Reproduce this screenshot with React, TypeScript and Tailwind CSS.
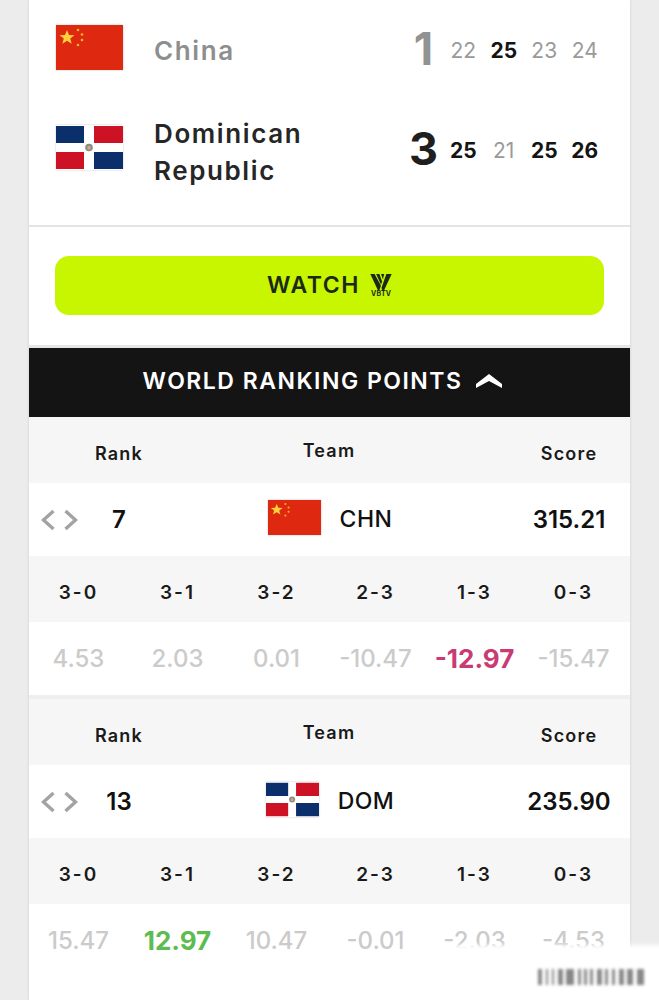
import React from "react";

const FONT = "[font-family:Inter,'Liberation_Sans',sans-serif]";

function ChinaFlag({ w, h }: { w: number; h: number }) {
  return (
    <svg width={w} height={h} viewBox="0 0 67 45" preserveAspectRatio="none" className="shrink-0 block shadow-[0_0_2px_rgba(0,0,0,0.25)]">
      <rect width="67" height="45" fill="#de2910" />
      <polygon fill="#ffd23a" points="11,5 13,10 18.500,10.300 14.200,13.500 15.700,18.800 11,15.800 6.300,18.800 7.800,13.500 3.500,10.300 9,10" />
      <circle cx="22" cy="5" r="1.300" fill="#f5b32f" />
      <circle cx="26" cy="9.500" r="1.300" fill="#f5b32f" />
      <circle cx="26" cy="15" r="1.300" fill="#f5b32f" />
      <circle cx="22" cy="20" r="1.300" fill="#f5b32f" />
    </svg>
  );
}

function DomFlag({ w, h }: { w: number; h: number }) {
  return (
    <svg width={w} height={h} viewBox="0 0 67 45" preserveAspectRatio="none" className="shrink-0 block shadow-[0_0_2px_rgba(0,0,0,0.2)]">
      <rect width="67" height="45" fill="#fff" />
      <rect x="0" y="1" width="28" height="17" fill="#0a2f6b" />
      <rect x="38" y="1" width="29" height="17" fill="#ce1226" />
      <rect x="0" y="27" width="28" height="17" fill="#ce1226" />
      <rect x="38" y="27" width="29" height="17" fill="#0a2f6b" />
      <circle cx="33" cy="22.500" r="3.800" fill="#8d8a80" />
      <rect x="31.500" y="21" width="3" height="3.500" fill="#c7ab8a" />
    </svg>
  );
}

function Match({ flag, name, sets, total, win }: { flag: React.ReactNode; name: React.ReactNode; sets: [number, boolean][]; total: number; win: boolean }) {
  return (
    <div className="flex items-center h-[100px] pl-[27px] pr-[25px]">
      <div className="mb-[6px]">{flag}</div>
      <div className={`ml-[31px] text-[26px] leading-[37px] font-semibold tracking-[1.600px] ${win ? "pt-[3px] text-[#262626]" : "text-[#8e8e8e]"}`}>{name}</div>
      <div className="ml-auto flex items-center">
        <div className={`w-[40px] pl-[1px] text-center text-[45px] leading-none font-bold mb-[3px] ${win ? "text-[#1f1f1f]" : "text-[#929292]"}`}>{total}</div>
        {sets.map(([v, w], i) => (
          <div key={i} className={`w-[40.500px] text-center text-[21px] leading-none ${w ? "font-bold text-[#141414]" : "font-normal text-[#9a9a9a]"}`}>{v}</div>
        ))}
      </div>
    </div>
  );
}

function Chevrons() {
  return (
    <svg width="37" height="22" viewBox="0 0 37 22" fill="none" stroke="#a3a3a3" strokeWidth="3.400" className="ml-[12px] shrink-0">
      <path d="M12.500 2 L2.500 11 L12.500 20" />
      <path d="M24.500 2 L34.500 11 L24.500 20" />
    </svg>
  );
}

function Table({ flag, code, rank, score, pts }: { flag: React.ReactNode; code: string; rank: number; score: string; pts: { v: string; c?: "loss" | "win" }[] }) {
  const labels = ["3-0", "3-1", "3-2", "2-3", "1-3", "0-3"];
  return (
    <div>
      <div className="flex h-[66px] bg-[#f6f6f6] text-[18px] font-semibold tracking-[1.200px] text-[#1a1a1a]">
        <div className="w-[180px] flex items-center justify-center pt-[6px]">Rank</div>
        <div className="w-[240px] flex items-center justify-center">Team</div>
        <div className="ml-auto w-[122px] flex items-center justify-center pt-[6px]">Score</div>
      </div>
      <div className="flex items-center h-[73px] bg-white text-[#111]">
        <div className="w-[180px] flex items-center">
          <Chevrons />
          <div className="w-[82px] text-center text-[24px] font-semibold leading-none">{rank}</div>
        </div>
        <div className="w-[240px] flex items-center justify-center gap-[19px] pl-[2px]">
          <div className="mb-[4px]">{flag}</div>
          <span className="text-[23px] font-medium tracking-[0.5px] leading-none">{code}</span>
        </div>
        <div className="ml-auto w-[122px] text-center text-[24px] font-semibold leading-none">{score}</div>
      </div>
      <div className="grid grid-cols-[repeat(6,99px)] h-[66px] bg-[#f6f6f6] items-center text-center pt-[8px] text-[19px] font-semibold tracking-[2px] text-[#1a1a1a]">
        {labels.map((l) => (
          <div key={l}>{l}</div>
        ))}
      </div>
      <div className="grid grid-cols-[repeat(6,99px)] h-[73px] bg-white items-center text-center">
        {pts.map((p, i) => (
          <div
            key={i}
            className={
              p.c === "loss"
                ? "text-[26px] font-bold text-[#c93b72]"
                : p.c === "win"
                ? "text-[26px] font-bold text-[#5cbc50]"
                : "text-[24px] font-medium text-[#cbcbcb]"
            }
          >
            {p.v}
          </div>
        ))}
      </div>
    </div>
  );
}

export default function App() {
  return (
    <div className={`relative h-[1000px] w-[659px] overflow-hidden bg-[#ececec] ${FONT}`}>
      <div className="ml-[29px] w-[601px] h-[1000px] bg-white shadow-[0_0_3px_rgba(0,0,0,0.12)]">
        <div className="h-[225px]">
          <Match flag={<ChinaFlag w={67} h={45} />} name="China" total={1} win={false} sets={[[22, false], [25, true], [23, false], [24, false]]} />
          <Match flag={<DomFlag w={67} h={45} />} name={<>Dominican<br />Republic</>} total={3} win sets={[[25, true], [21, false], [25, true], [26, true]]} />
        </div>
        <div className="h-[2px] bg-[#e4e4e4]" />
        <div className="pt-[29px] pb-[30px] px-[26px]">
          <div className="h-[59px] rounded-[14px] bg-[#c7f600] flex items-center justify-center gap-[10px] text-[#1b2a17]">
            <span className="text-[23px] font-semibold tracking-[1.600px] leading-none">WATCH</span>
            <span className="flex flex-col items-center">
              <svg width="22" height="16" viewBox="0 0 20 15" fill="#1b2a17">
                <path d="M0 0 H4 L10 11 L8.500 15 H7 Z" />
                <path d="M5.500 0 H8.500 L11 7 L10 10 Z" />
                <path d="M10 0 H13 L11.800 5 Z" />
                <path d="M15 0 H20 L13 15 H11 L10.500 13 Z" />
              </svg>
              <span className="text-[7px] font-bold leading-[8px] tracking-[0.2px]">VBTV</span>
            </span>
          </div>
        </div>
        <div className="h-[3px] bg-[#e6e6e6]" />
        <div className="h-[69px] bg-[#141414] flex items-center justify-center gap-[14px] text-white pr-[14px] pb-[3px]">
          <span className="text-[23px] font-semibold tracking-[1.500px] leading-none">WORLD RANKING POINTS</span>
          <svg width="26" height="14" viewBox="0 0 26 14" fill="#fff">
            <path d="M13 0 L26 10 V14 L13 7 L0 14 V10 Z" />
          </svg>
        </div>
        <Table
          flag={<ChinaFlag w={53} h={35} />}
          code="CHN"
          rank={7}
          score="315.21"
          pts={[{ v: "4.53" }, { v: "2.03" }, { v: "0.01" }, { v: "-10.47" }, { v: "-12.97", c: "loss" }, { v: "-15.47" }]}
        />
        <div className="h-[4px] bg-[#efefef]" />
        <Table
          flag={<DomFlag w={53} h={35} />}
          code="DOM"
          rank={13}
          score="235.90"
          pts={[{ v: "15.47" }, { v: "12.97", c: "win" }, { v: "10.47" }, { v: "-0.01" }, { v: "-2.03" }, { v: "-4.53" }]}
        />
      </div>
      <div className="absolute left-[430px] top-[945px] right-[-6px] bottom-[-6px] blur-[2px] bg-gradient-to-r from-transparent via-white to-white via-[8%]" />
      <div className="absolute left-[532px] top-[964px] w-[118px] h-[26px] flex items-center justify-between px-[6px] blur-[1.500px] opacity-70">
        {[6, 3, 3, 8, 14, 3, 3, 4, 8, 4, 4, 8, 10, 12].map((w, i) => (
          <div key={i} className="h-[16px] bg-[#555]" style={{ width: w / 2 + 1 }} />
        ))}
      </div>
    </div>
  );
}
